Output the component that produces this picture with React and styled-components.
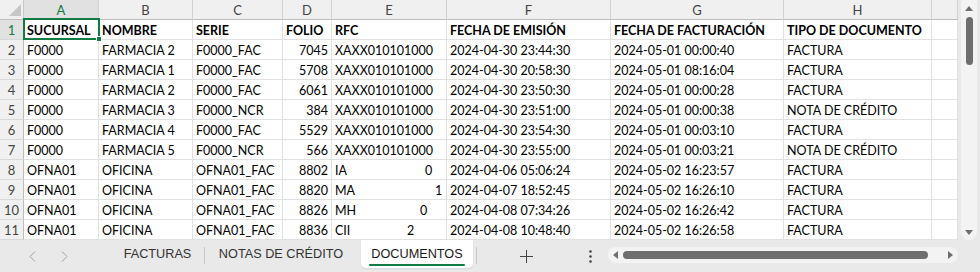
import React from "react";
import styled, { createGlobalStyle } from "styled-components";

const GlobalStyle = createGlobalStyle`
  html, body {
    margin: 0;
    padding: 0;
    background: #e9e9e9;
    overflow: hidden;
  }
  * {
    box-sizing: border-box;
  }
`;

const COLS = [75, 94, 90, 49, 115, 164, 173, 148, 26];
const LETTERS = ["A", "B", "C", "D", "E", "F", "G", "H", ""];
const GREEN = "#107c41";

const HEADERS = [
  "SUCURSAL",
  "NOMBRE",
  "SERIE",
  "FOLIO",
  "RFC",
  "FECHA DE EMISIÓN",
  "FECHA DE FACTURACIÓN",
  "TIPO DE DOCUMENTO",
  "",
];

const ROWS = [
  ["F0000", "FARMACIA 2", "F0000_FAC", "7045", "XAXX010101000", "2024-04-30 23:44:30", "2024-05-01 00:00:40", "FACTURA"],
  ["F0000", "FARMACIA 1", "F0000_FAC", "5708", "XAXX010101000", "2024-04-30 20:58:30", "2024-05-01 08:16:04", "FACTURA"],
  ["F0000", "FARMACIA 2", "F0000_FAC", "6061", "XAXX010101000", "2024-04-30 23:50:30", "2024-05-01 00:00:28", "FACTURA"],
  ["F0000", "FARMACIA 3", "F0000_NCR", "384", "XAXX010101000", "2024-04-30 23:51:00", "2024-05-01 00:00:38", "NOTA DE CRÉDITO"],
  ["F0000", "FARMACIA 4", "F0000_FAC", "5529", "XAXX010101000", "2024-04-30 23:54:30", "2024-05-01 00:03:10", "FACTURA"],
  ["F0000", "FARMACIA 5", "F0000_NCR", "566", "XAXX010101000", "2024-04-30 23:55:00", "2024-05-01 00:03:21", "NOTA DE CRÉDITO"],
  ["OFNA01", "OFICINA", "OFNA01_FAC", "8802", { lead: "IA", tail: "0", w: 90 }, "2024-04-06 05:06:24", "2024-05-02 16:23:57", "FACTURA"],
  ["OFNA01", "OFICINA", "OFNA01_FAC", "8820", { lead: "MA", tail: "1", w: 100 }, "2024-04-07 18:52:45", "2024-05-02 16:26:10", "FACTURA"],
  ["OFNA01", "OFICINA", "OFNA01_FAC", "8826", { lead: "MH", tail: "0", w: 85 }, "2024-04-08 07:34:26", "2024-05-02 16:26:42", "FACTURA"],
  ["OFNA01", "OFICINA", "OFNA01_FAC", "8836", { lead: "CII", tail: "2", w: 72 }, "2024-04-08 10:48:40", "2024-05-02 16:26:58", "FACTURA"],
];

const Page = styled.div`
  width: 980px;
  height: 272px;
  display: flex;
  flex-direction: column;
  background: #e9e9e9;
  font-family: Lato, "Liberation Sans", sans-serif;
`;

const SheetArea = styled.div`
  height: 240px;
  display: flex;
`;

const Grid = styled.div`
  width: 958px;
  display: grid;
  grid-template-columns: 24px ${COLS.map((w) => `${w}px`).join(" ")};
  grid-auto-rows: 20px;
  background: #fff;
  overflow: hidden;
`;

const Corner = styled.div`
  background: #f0f0f0;
  border-right: 1px solid #c8c8c8;
  border-bottom: 1px solid #bdbdbd;
  display: flex;
  align-items: flex-end;
  justify-content: flex-end;
  padding: 0 2px 3px 0;
`;

const ColHead = styled.div`
  background: ${(p) => (p.$active ? "#e1e1e1" : "#f0f0f0")};
  color: ${(p) => (p.$active ? GREEN : "#444")};
  border-right: 1px solid #d0d0d0;
  border-bottom: 1px solid #bdbdbd;
  display: flex;
  align-items: center;
  justify-content: center;
  font-size: 13px;
`;

const RowHead = styled.div`
  background: ${(p) => (p.$active ? "#e1e1e1" : "#f0f0f0")};
  color: ${(p) => (p.$active ? GREEN : "#444")};
  border-right: 1px solid #bdbdbd;
  border-bottom: 1px solid #d8d8d8;
  display: flex;
  align-items: center;
  justify-content: center;
  font-size: 13px;
  padding-top: 1px;
`;

const Cell = styled.div`
  position: relative;
  border-right: 1px solid #e1e1e1;
  border-bottom: 1px solid #e1e1e1;
  display: flex;
  align-items: center;
  justify-content: ${(p) => (p.$right ? "flex-end" : "flex-start")};
  padding: 1px 3px 0 3px;
  font-size: 12.5px;
  font-weight: ${(p) => (p.$bold ? 700 : 400)};
  color: #000;
  white-space: nowrap;
  overflow: ${(p) => (p.$clip ? "hidden" : "visible")};
`;

const Lead = styled.span`
  display: inline-block;
  width: ${(p) => p.$w}px;
  overflow: hidden;
`;

const Selection = styled.div`
  position: absolute;
  z-index: 3;
  top: -2px;
  left: -1px;
  right: -2px;
  bottom: -1px;
  border: 2px solid ${GREEN};
  pointer-events: none;
`;

const Handle = styled.div`
  position: absolute;
  right: -4px;
  bottom: -4px;
  width: 6px;
  height: 6px;
  background: ${GREEN};
  border: 1px solid #fff;
`;

const VScroll = styled.div`
  width: 22px;
  padding: 0 3px 0 3px;
  display: flex;
`;

const VTrack = styled.div`
  flex: 1;
  background: #f3f3f3;
  border-radius: 0 0 8px 8px;
  display: flex;
  flex-direction: column;
  align-items: center;
  padding: 6px 0 5px;
`;

const VThumb = styled.div`
  width: 7px;
  height: 48px;
  margin-top: 6px;
  border-radius: 4px;
  background: #6e6e6e;
`;

const Spring = styled.div`
  flex: 1;
`;

const TabBar = styled.div`
  height: 32px;
  display: flex;
  align-items: stretch;
  font-family: "Liberation Sans", Arial, sans-serif;
`;

const Nav = styled.div`
  width: 111px;
  padding-left: 16px;
  display: flex;
`;

const NavBtn = styled.div`
  width: 32px;
  display: flex;
  align-items: center;
  justify-content: center;
`;

const Tab = styled.div`
  width: ${(p) => p.$w}px;
  margin-bottom: 4px;
  margin-left: ${(p) => p.$ml || 0}px;
  display: flex;
  align-items: center;
  justify-content: center;
  font-size: 12.7px;
  color: ${(p) => (p.$active ? "#1a1a1a" : "#333")};
  background: ${(p) => (p.$active ? "#fff" : "transparent")};
  border-radius: 0 0 5px 5px;
  position: relative;
  box-shadow: ${(p) => (p.$active ? "0 1px 2px rgba(0,0,0,0.08)" : "none")};
`;

const Underline = styled.div`
  position: absolute;
  left: 8px;
  right: 8px;
  bottom: 2px;
  height: 2px;
  background: ${GREEN};
  border-radius: 1px;
`;

const Sep = styled.div`
  width: 1px;
  margin: 7px ${(p) => p.$gap || 0}px 8px;
  background: #c8c8c8;
`;

const IconBtn = styled.div`
  width: ${(p) => p.$w}px;
  display: flex;
  align-items: center;
  justify-content: center;
`;

const HScroll = styled.div`
  width: 350px;
  margin: 7px 0 9px;
  background: #f3f3f3;
  border-radius: 8px;
  display: flex;
  align-items: center;
  padding: 0 5px;
  gap: 5px;
`;

const HThumb = styled.div`
  flex: 1;
  height: 8px;
  margin-right: 15px;
  border-radius: 4px;
  background: #6e6e6e;
`;

const Tri = ({ dir }) => {
  const pts = {
    up: "0,5 4,0 8,5",
    down: "0,0 8,0 4,5",
    left: "5,0 5,8 0,4",
    right: "0,0 0,8 5,4",
  }[dir];
  const vertical = dir === "up" || dir === "down";
  return (
    <svg width={vertical ? 8 : 5} height={vertical ? 5 : 8} viewBox={vertical ? "0 0 8 5" : "0 0 5 8"}>
      <polygon points={pts} fill="#6e6e6e" />
    </svg>
  );
};

const Chevron = ({ left }) => (
  <svg width="7" height="11" viewBox="0 0 7 11">
    <polyline
      points={left ? "6,0.5 1,5.5 6,10.5" : "1,0.5 6,5.5 1,10.5"}
      fill="none"
      stroke="#a0a0a0"
      strokeWidth="1"
    />
  </svg>
);

const renderValue = (v) =>
  typeof v === "object" ? (
    <>
      <Lead $w={v.w}>{v.lead}</Lead>
      <span>{v.tail}</span>
    </>
  ) : (
    v
  );

export default function App() {
  return (
    <Page>
      <GlobalStyle />
      <SheetArea>
        <Grid>
          <Corner>
            <svg width="12" height="12" viewBox="0 0 12 12">
              <polygon points="12,0 12,12 0,12" fill="#c6c6c6" />
            </svg>
          </Corner>
          {LETTERS.map((l, i) => (
            <ColHead key={`h${i}`} $active={i === 0}>
              {l}
            </ColHead>
          ))}

          <RowHead $active>1</RowHead>
          {HEADERS.map((h, i) => (
            <Cell key={`t${i}`} $bold>
              {h}
              {i === 0 && (
                <Selection>
                  <Handle />
                </Selection>
              )}
            </Cell>
          ))}

          {ROWS.map((row, r) => (
            <React.Fragment key={r}>
              <RowHead>{r + 2}</RowHead>
              {row.map((v, c) => (
                <Cell key={c} $right={c === 3} $clip={c === 4 && typeof v === "object"}>
                  {renderValue(v)}
                </Cell>
              ))}
              <Cell />
            </React.Fragment>
          ))}
        </Grid>
        <VScroll>
          <VTrack>
            <Tri dir="up" />
            <VThumb />
            <Spring />
            <Tri dir="down" />
          </VTrack>
        </VScroll>
      </SheetArea>

      <TabBar>
        <Nav>
          <NavBtn>
            <Chevron left />
          </NavBtn>
          <NavBtn>
            <Chevron />
          </NavBtn>
        </Nav>
        <Tab $w={93}>FACTURAS</Tab>
        <Sep />
        <Tab $w={152}>NOTAS DE CRÉDITO</Tab>
        <Tab $w={112} $ml={4} $active>
          DOCUMENTOS
          <Underline />
        </Tab>
        <Sep $gap={3} />
        <IconBtn $w={93}>
          <svg width="13" height="13" viewBox="0 0 13 13">
            <line x1="6.5" y1="0" x2="6.5" y2="13" stroke="#444" strokeWidth="1" />
            <line x1="0" y1="6.5" x2="13" y2="6.5" stroke="#444" strokeWidth="1" />
          </svg>
        </IconBtn>
        <IconBtn $w={35}>
          <svg width="3" height="13" viewBox="0 0 3 13">
            <circle cx="1.5" cy="1.5" r="1.3" fill="#444" />
            <circle cx="1.5" cy="6.5" r="1.3" fill="#444" />
            <circle cx="1.5" cy="11.5" r="1.3" fill="#444" />
          </svg>
        </IconBtn>
        <HScroll>
          <Tri dir="left" />
          <HThumb />
          <Tri dir="right" />
        </HScroll>
      </TabBar>
    </Page>
  );
}
